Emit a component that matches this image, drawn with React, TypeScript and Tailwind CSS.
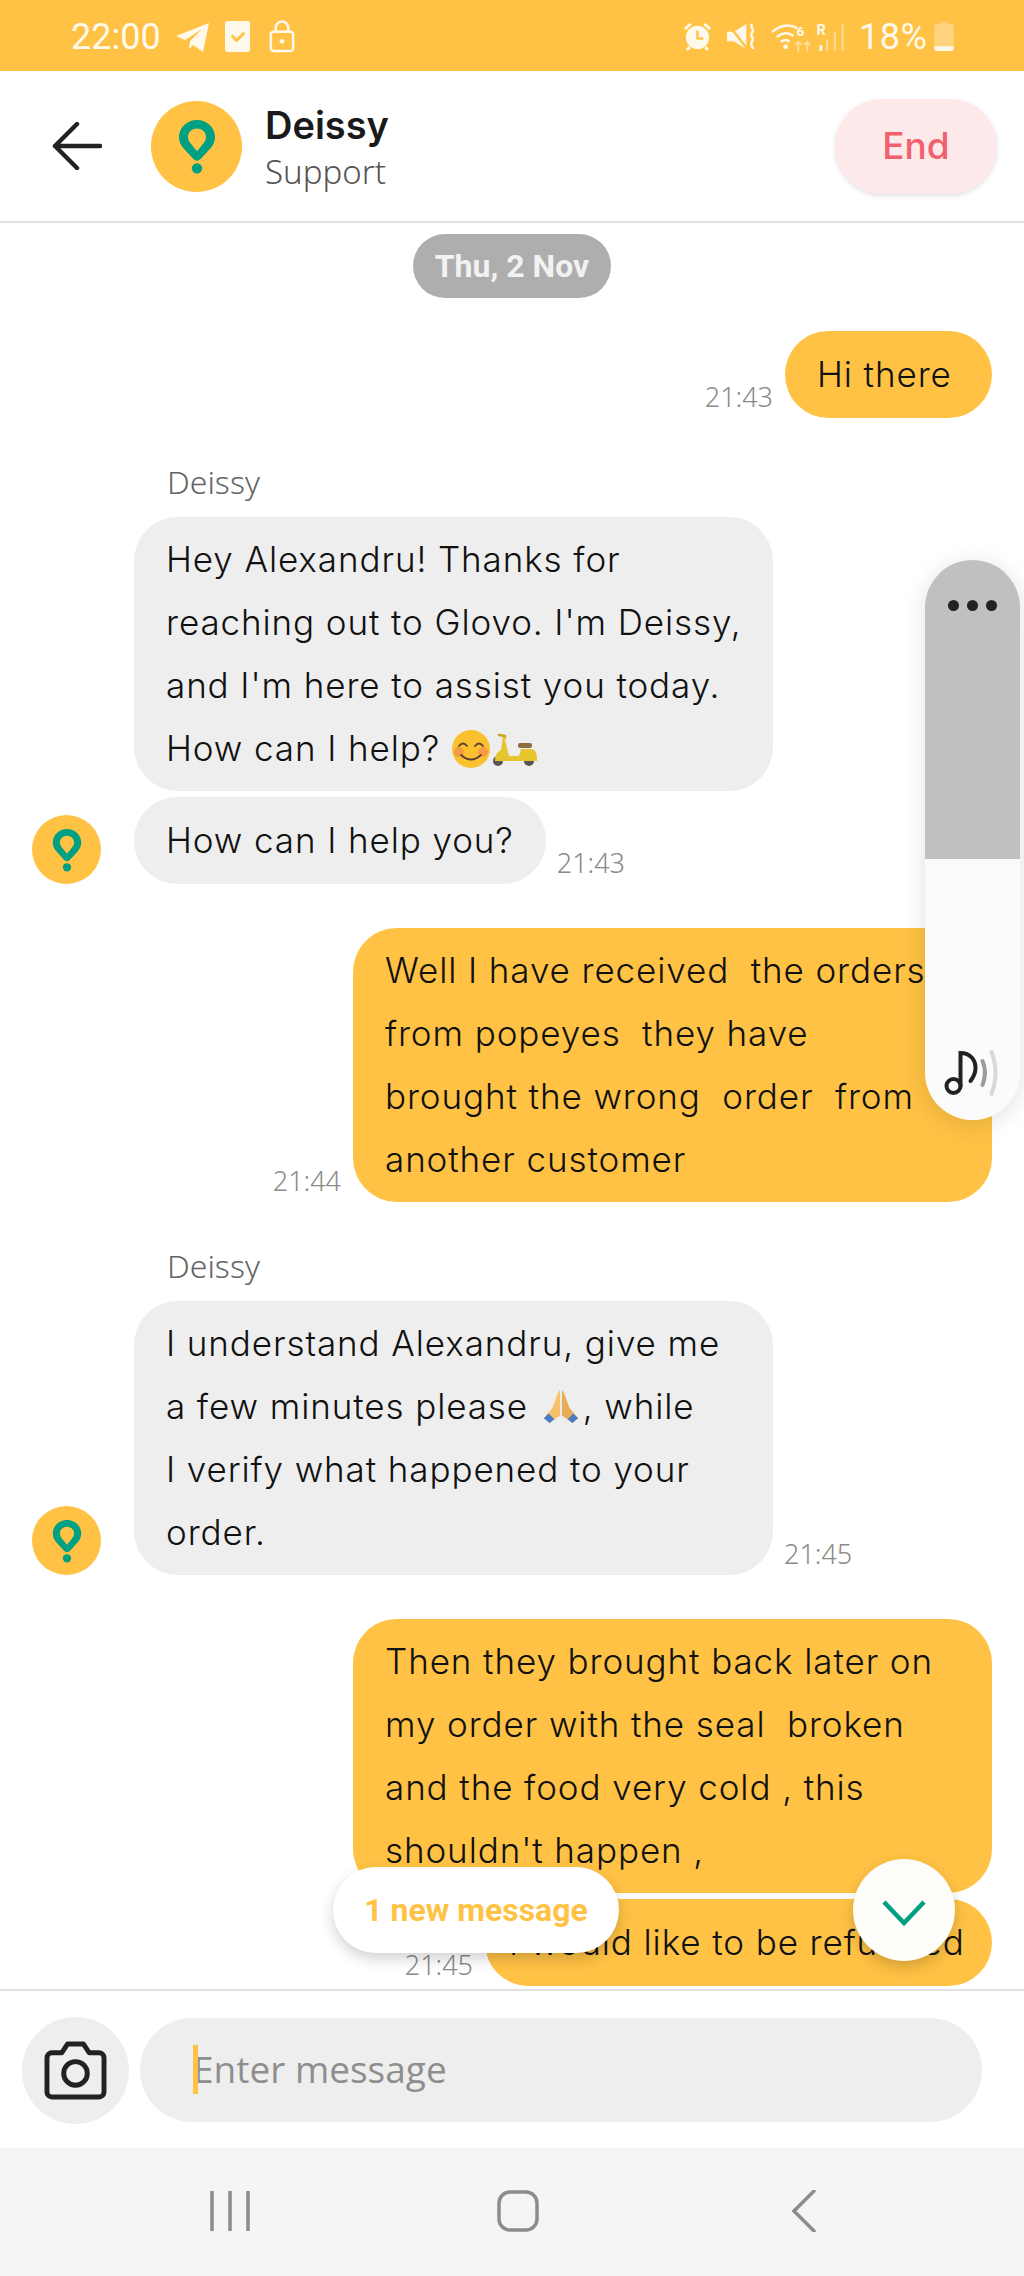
import React from "react";

const Pin = ({ className }: { className: string }) => (
  <svg viewBox="0 0 40 58" className={className}>
    <path fillRule="evenodd" fill="#00A082" d="M20 1C9.500 1 1 9 1 19C1 24 3 27.500 6 31L16 42C18 44.500 22 44.500 24 42L34 31C37 27.500 39 24 39 19C39 9 30.500 1 20 1ZM20 10C14.500 10 10.500 14 10.500 19C10.500 22 12 24 13.500 26L20 34L26.500 26C28 24 29.500 22 29.500 19C29.500 14 25.500 10 20 10Z" />
    <circle cx="20" cy="52" r="5.500" fill="#00A082" />
  </svg>
);

const Smile = () => (
  <svg viewBox="0 0 40 40" className="inline-block w-[40px] h-[40px] align-[-8px]">
    <circle cx="20" cy="20" r="19" fill="#FBC02D" />
    <circle cx="8" cy="23" r="5" fill="#F28B50" opacity="0.7" />
    <circle cx="32" cy="23" r="5" fill="#F28B50" opacity="0.7" />
    <path d="M8 17q4-5 8 0M24 17q4-5 8 0M10 26q10 9 20 0" fill="none" stroke="#5d4037" strokeWidth="1.800" strokeLinecap="round" />
  </svg>
);

const Scooter = () => (
  <svg viewBox="0 0 46 36" className="inline-block w-[46px] h-[36px] align-[-7px]">
    <circle cx="7" cy="29" r="5" fill="#555" />
    <circle cx="38" cy="29" r="5" fill="#555" />
    <path d="M12 3l4 2-2 3 4 16h10l2-7h10c4 0 6 4 6 9v3H4c0-6 2-9 6-11z" fill="#E6C62E" />
    <rect x="27" y="11" width="14" height="5" rx="2" fill="#8D6E3F" />
    <path d="M8 3l6 1" stroke="#C9A820" strokeWidth="2.500" strokeLinecap="round" />
  </svg>
);

const Pray = () => (
  <svg viewBox="0 0 44 40" className="inline-block w-[44px] h-[38px] align-[-6px]">
    <path d="M21 3c-3 3-6 15-8 19l-9 11 6 5 11-8z" fill="#F5C26B" />
    <path d="M23 3c3 3 6 15 8 19l9 11-6 5-11-8z" fill="#E9AE55" />
    <path d="M4 33l6 5 5-4-6-6zM40 33l-6 5-5-4 6-6z" fill="#4A7BC8" />
  </svg>
);

const Avatar = () => (
  <div className="w-[69px] h-[69px] rounded-full bg-[#FFC244] flex items-center justify-center shrink-0">
    <Pin className="w-[30px] h-[44px]" />
  </div>
);

const Time = ({ t }: { t: string }) => (
  <span className="font-['Noto_Sans'] font-light text-[27px] leading-[30px] text-[#8a8a8a] pb-[6px] shrink-0">{t}</span>
);

const text = "font-['Inter'] font-light text-[35px] tracking-[0.9px] leading-[63px] text-[#111] whitespace-pre";

const Out = ({ lines, time, className = "", bubble = "w-[639px] py-[11px]" }: { lines: string[]; time: string; className?: string; bubble?: string }) => (
  <div className={`flex items-end justify-end gap-[12px] pr-[32px] ${className}`}>
    <Time t={time} />
    <div className={`bg-[#FFC244] rounded-[44px] px-[32px] ${bubble} ${text}`}>
      {lines.map((l) => <div key={l}>{l}</div>)}
    </div>
  </div>
);

const In = ({ children, avatar, time, wide = true, className = "" }: { children: React.ReactNode; avatar?: boolean; time?: string; wide?: boolean; className?: string }) => (
  <div className={`flex items-end pl-[32px] ${className}`}>
    {avatar ? <Avatar /> : <div className="w-[69px] shrink-0" />}
    <div className={`ml-[33px] bg-[#EEEEEE] rounded-[44px] px-[32px] ${wide ? "py-[11px] w-[639px]" : "py-[12px]"} ${text}`}>
      {children}
    </div>
    {time && <div className="ml-[11px] flex"><Time t={time} /></div>}
  </div>
);

const Name = ({ className = "" }: { className?: string }) => (
  <div className={`pl-[167px] font-['Noto_Sans'] font-light text-[32px] leading-[36px] text-[#666] ${className}`}>Deissy</div>
);

export default function App() {
  return (
    <div className="relative w-[1024px] h-[2276px] overflow-hidden bg-white flex flex-col">
      {/* status bar */}
      <div className="h-[71px] shrink-0 bg-[#FFC244] flex items-center justify-between pl-[71px] pr-[70px] pt-[2px] text-[#FFF9EC] font-['Roboto'] text-[36px]">
        <div className="flex items-center">
          <span className="leading-none">22:00</span>
          <svg viewBox="0 0 34 32" className="w-[34px] h-[32px] ml-[15px]" fill="#FFF9EC"><path d="M0 15L33 2 27 31 17 24 13 28 14 20 26 8 9 19z" /></svg>
          <svg viewBox="0 0 26 32" className="w-[25px] h-[31px] ml-[15px]"><rect x="0" y="0" width="26" height="32" rx="3" fill="#FFF9EC" /><path d="M7 15l5 5 8-8" stroke="#FFC244" strokeWidth="3" fill="none" /></svg>
          <svg viewBox="0 0 26 34" className="w-[26px] h-[33px] ml-[19px]" fill="none" stroke="#FFF9EC" strokeWidth="2.600"><rect x="1.500" y="12" width="23" height="20" rx="3" /><path d="M6.500 12V8a6.500 6.500 0 0 1 13 0v4" /><circle cx="13" cy="22" r="2.500" fill="#FFF9EC" stroke="none" /></svg>
        </div>
        <div className="flex items-center">
          <svg viewBox="0 0 30 30" className="w-[29px] h-[29px]"><circle cx="15" cy="16" r="12" fill="#FFF9EC" /><path d="M15 9v8h6" stroke="#FFC244" strokeWidth="2.500" fill="none" /><path d="M2 7l6-5M28 7l-6-5M7 26l-3 3M23 26l3 3" stroke="#FFF9EC" strokeWidth="3" /></svg>
          <svg viewBox="0 0 30 28" className="w-[29px] h-[27px] ml-[15px]"><path d="M0 9h7l13-8v26L7 19H0z" fill="#FFF9EC" /><path d="M1 1l20 26" stroke="#FFC244" strokeWidth="2.500" /><path d="M26 1c-3 4 3 5 0 9s3 5 0 9 1 5 1 8" stroke="#FFF9EC" strokeWidth="2.500" fill="none" /></svg>
          <svg viewBox="0 0 42 30" className="w-[41px] h-[30px] ml-[15px]" fill="none" stroke="#FFF9EC" strokeWidth="2.500"><path d="M1 10q13-11 26-4M6 15q9-7 17-1M10 20q5-4 9 0" /><circle cx="15" cy="25" r="2.500" fill="#FFF9EC" stroke="none" /><path d="M28 30v-10M25 23l3-3 3 3M37 30v-10M34 23l3-3 3 3" stroke="#FFDC94" strokeWidth="2" /><text x="26" y="14" fontSize="14" fill="#FFF9EC" stroke="none" fontFamily="Roboto" fontWeight="700">6</text></svg>
          <svg viewBox="0 0 30 30" className="w-[30px] h-[29px] ml-[4px]"><text x="0" y="13" fontSize="15" fill="#FFF9EC" fontFamily="Roboto" fontWeight="700">R</text><rect x="3" y="24" width="3" height="6" fill="#FFF9EC" /><rect x="10" y="18" width="2" height="12" fill="#FFDC94" /><rect x="18" y="10" width="2" height="20" fill="#FFDC94" /><rect x="26" y="2" width="2" height="28" fill="#FFDC94" /></svg>
          <span className="leading-none ml-[13px] w-[72px] tracking-[0.5px]">18%</span>
          <svg viewBox="0 0 20 30" className="w-[20px] h-[29px] ml-[3px]"><path d="M6 0h8v2h3a3 3 0 0 1 3 3v22a3 3 0 0 1-3 3H3a3 3 0 0 1-3-3V5a3 3 0 0 1 3-3h3z" fill="#FFD47E" /><path d="M0 25h20v2a3 3 0 0 1-3 3H3a3 3 0 0 1-3-3z" fill="#FFF9EC" /></svg>
        </div>
      </div>

      {/* header */}
      <div className="h-[152px] shrink-0 border-b-2 border-[#E2E2E2] flex items-center pl-[52px] pr-[27px]">
        <svg viewBox="0 0 50 48" className="w-[50px] h-[48px] shrink-0" fill="none" stroke="#222" strokeWidth="4.500" strokeLinecap="round" strokeLinejoin="round"><path d="M48 24H3M25 2L3 24l22 22" /></svg>
        <div className="ml-[49px] w-[91px] h-[91px] rounded-full bg-[#FFC244] flex items-center justify-center shrink-0">
          <Pin className="w-[38px] h-[57px]" />
        </div>
        <div className="ml-[23px] flex-1 pt-[2px]">
          <div className="font-['Inter'] font-semibold text-[38px] leading-[48px] text-[#1a1a1a]">Deissy</div>
          <div className="font-['Noto_Sans'] font-light text-[33px] leading-[42px] text-[#555] mt-[2px]">Support</div>
        </div>
        <div className="w-[162px] h-[95px] rounded-full bg-[#FDE8EA] shadow-[0_2px_5px_rgba(0,0,0,0.12)] flex items-center justify-center font-['Inter'] font-medium text-[37px] text-[#F0616D]">End</div>
      </div>

      {/* messages */}
      <div className="flex-1 overflow-hidden flex flex-col">
        <div className="self-center mt-[11px] h-[64px] px-[22px] rounded-full bg-[#AEAEAE] flex items-center font-['Roboto'] font-bold text-[32px] text-[#F2F2F2]">Thu, 2 Nov</div>
        <Out className="mt-[33px]" bubble="w-[207px] py-[12px]" time="21:43" lines={["Hi there"]} />
        <Name className="mt-[46px]" />
        <In className="mt-[17px]">
          <div>Hey Alexandru! Thanks for</div>
          <div>reaching out to Glovo. I'm Deissy,</div>
          <div>and I'm here to assist you today.</div>
          <div>How can I help? <Smile /><Scooter /></div>
        </In>
        <In className="mt-[6px]" avatar wide={false} time="21:43">How can I help you?</In>
        <Out className="mt-[44px]" time="21:44" lines={["Well I have received  the orders", "from popeyes  they have", "brought the wrong  order  from", "another customer"]} />
        <Name className="mt-[46px]" />
        <In className="mt-[17px]" avatar time="21:45">
          <div>I understand Alexandru, give me</div>
          <div>a few minutes please <Pray />, while</div>
          <div>I verify what happened to your</div>
          <div>order.</div>
        </In>
        <Out className="mt-[44px]" time="" lines={["Then they brought back later on", "my order with the seal  broken", "and the food very cold , this", "shouldn't happen ,"]} />
        <Out className="mt-[6px]" bubble="w-[507px] py-[12px] pl-[24px]" time="21:45" lines={["I would like to be refunded"]} />
      </div>

      {/* composer */}
      <div className="h-[159px] shrink-0 border-t-2 border-[#E2E2E2] flex items-center pl-[22px] pr-[42px] pt-[1px]">
        <div className="w-[107px] h-[107px] rounded-full bg-[#EEEEEE] flex items-center justify-center shrink-0">
          <svg viewBox="0 0 64 60" className="w-[63px] h-[59px]" fill="none" stroke="#222" strokeWidth="5" strokeLinejoin="round"><path d="M8 12h10l6-9h16l6 9h10a5 5 0 0 1 5 5v35a5 5 0 0 1-5 5H8a5 5 0 0 1-5-5V17a5 5 0 0 1 5-5z" /><circle cx="32" cy="33" r="12" /></svg>
        </div>
        <div className="ml-[11px] flex-1 h-[104px] rounded-full bg-[#EEEEEE] flex items-center pl-[53px] pb-[3px] relative">
          <div className="absolute left-[53px] top-[27px] w-[5px] h-[49px] bg-[#FFC244]" />
          <span className="font-['Open_Sans'] text-[37px] text-[#8e8e8e]">Enter message</span>
        </div>
      </div>

      {/* nav */}
      <div className="h-[128px] shrink-0 bg-[#F5F5F5] relative flex items-start pt-[42px]">
        <svg viewBox="0 0 40 42" className="ml-[210px] w-[40px] h-[42px]" stroke="#8c8c8c" strokeWidth="3.500" fill="none"><path d="M2 1v40M20 1v40M38 1v40" /></svg>
        <svg viewBox="0 0 42 42" className="ml-[247px] w-[42px] h-[42px]" stroke="#8c8c8c" strokeWidth="3.500" fill="none"><rect x="2" y="2" width="38" height="38" rx="11" /></svg>
        <svg viewBox="0 0 24 42" className="ml-[253px] w-[24px] h-[42px]" stroke="#8c8c8c" strokeWidth="3.500" fill="none" strokeLinecap="round"><path d="M22 1L2 21l20 20" /></svg>
      </div>

      {/* volume slider overlay */}
      <div className="absolute left-[925px] top-[560px] w-[95px] h-[560px] rounded-[48px] overflow-hidden flex flex-col shadow-[0_4px_24px_rgba(0,0,0,0.12)]">
        <div className="h-[299px] bg-[#C0C0C0] flex justify-center gap-[8px] pt-[40px]">
          <span className="w-[11px] h-[11px] rounded-full bg-[#222]" />
          <span className="w-[11px] h-[11px] rounded-full bg-[#222]" />
          <span className="w-[11px] h-[11px] rounded-full bg-[#222]" />
        </div>
        <div className="flex-1 bg-[#FBFBFB] flex items-end justify-center pb-[23px]">
          <svg viewBox="0 0 56 48" className="w-[57px] h-[48px]" fill="none" stroke="#222" strokeWidth="4" strokeLinecap="round"><circle cx="9" cy="37" r="7" /><path d="M16 37V4c10 0 15 7 15 15 0 5-2 9-5 13" /><path d="M38 12q5 11 0 24" stroke="#9a9a9a" /><path d="M47 3q8 21 0 42" stroke="#d8d8d8" /></svg>
        </div>
      </div>

      {/* new message pill */}
      <div className="absolute left-[333px] top-[1867px] w-[286px] h-[86px] rounded-full bg-white shadow-[0_6px_14px_rgba(0,0,0,0.18)] flex items-center justify-center font-['Roboto'] font-bold text-[32px] text-[#FFC244]">1 new message</div>

      {/* scroll down */}
      <div className="absolute left-[853px] top-[1859px] w-[102px] h-[102px] rounded-full bg-[#FDFDF9] shadow-[0_6px_14px_rgba(0,0,0,0.18)] flex items-center justify-center">
        <svg viewBox="0 0 44 26" className="w-[44px] h-[26px] mt-[6px]" fill="none" stroke="#00A082" strokeWidth="4.500"><path d="M2 2l20 21L42 2" /></svg>
      </div>
    </div>
  );
}
